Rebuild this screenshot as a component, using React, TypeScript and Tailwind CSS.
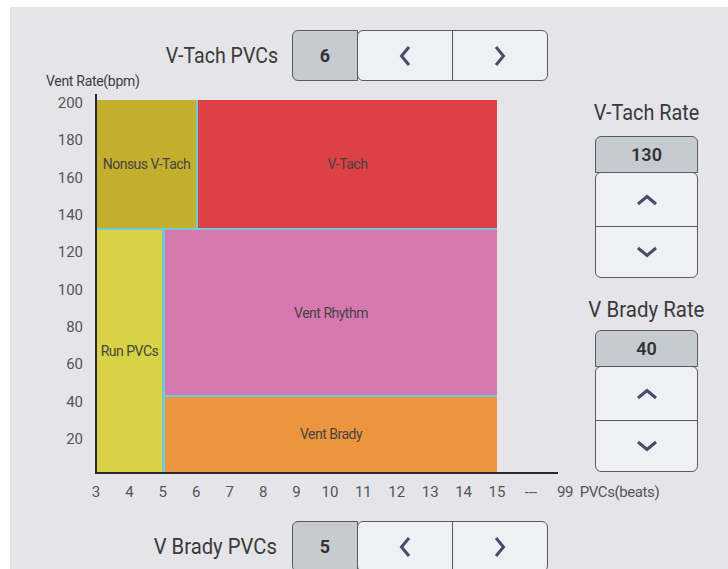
import React from "react";

const F = "font-['Roboto',sans-serif]";

function ChevLeft() {
  return (
    <svg width="12" height="22" viewBox="0 0 12 22">
      <path d="M10 2 L2.5 11 L10 20" stroke="#4b4a68" strokeWidth="3" fill="none" />
    </svg>
  );
}
function ChevRight() {
  return (
    <svg width="12" height="22" viewBox="0 0 12 22">
      <path d="M2 2 L9.5 11 L2 20" stroke="#4b4a68" strokeWidth="3" fill="none" />
    </svg>
  );
}
function ChevUp() {
  return (
    <svg width="22" height="12" viewBox="0 0 22 12">
      <path d="M2 10 L11 2.5 L20 10" stroke="#4b4a68" strokeWidth="3" fill="none" />
    </svg>
  );
}
function ChevDown() {
  return (
    <svg width="22" height="12" viewBox="0 0 22 12">
      <path d="M2 2 L11 9.5 L20 2" stroke="#4b4a68" strokeWidth="3" fill="none" />
    </svg>
  );
}

function HBox({ value }: { value: string }) {
  return (
    <div className="flex h-[51px] w-[256px]">
      <div className="w-[66px] h-full bg-[#c6cad1] border border-[#5b5b5b] rounded-l-[6px] flex items-center justify-center text-[18px] font-bold text-[#333]">
        {value}
      </div>
      <div className="flex-1 h-full -ml-px bg-[#eff0f4] border border-[#5b5b5b] rounded-[6px] flex">
        <div className="w-[95px] h-full border-r border-[#5b5b5b] flex items-center justify-center">
          <ChevLeft />
        </div>
        <div className="flex-1 h-full flex items-center justify-center">
          <ChevRight />
        </div>
      </div>
    </div>
  );
}

function VBox({ value }: { value: string }) {
  return (
    <div className="flex flex-col w-[103px]">
      <div className="h-[37px] bg-[#c6cad1] border border-[#5b5b5b] rounded-t-[6px] flex items-center justify-center text-[18px] font-semibold text-[#333]">
        {value}
      </div>
      <div className="-mt-px bg-[#eff0f4] border border-[#5b5b5b] rounded-[6px] flex flex-col">
        <div className="h-[54px] border-b border-[#5b5b5b] flex items-center justify-center">
          <ChevUp />
        </div>
        <div className="h-[50px] flex items-center justify-center">
          <ChevDown />
        </div>
      </div>
    </div>
  );
}

const yTicks = [200, 180, 160, 140, 120, 100, 80, 60, 40, 20];
const xTicks = [3, 4, 5, 6, 7, 8, 9, 10, 11, 12, 13, 14, 15];

function Chart() {
  return (
    <div className={`relative w-[585px] h-[440px] ${F}`}>
      <div className="absolute left-[36px] top-[-9px] text-[14px] leading-[18px] text-[#3d3d3d] whitespace-nowrap tracking-[-0.3px]">
        Vent Rate(bpm)
      </div>
      {yTicks.map((v) => (
        <div
          key={v}
          className="absolute right-[512px] text-[15px] leading-[18px] text-[#555] -translate-y-1/2"
          style={{ top: 22 + (200 - v) * 1.8667 }}
        >
          {v}
        </div>
      ))}
      {xTicks.map((v) => (
        <div
          key={v}
          className="absolute top-[402px] text-[15px] leading-[18px] text-[#555] -translate-x-1/2"
          style={{ left: 86 + (v - 3) * 33.42 }}
        >
          {v}
        </div>
      ))}
      <div className="absolute top-[402px] left-[521px] -translate-x-1/2 text-[15px] leading-[18px] text-[#555]">---</div>
      <div className="absolute top-[402px] left-[547px] text-[15px] leading-[18px] text-[#555] whitespace-nowrap tracking-[-0.4px]">
        99&nbsp; PVCs(beats)
      </div>
      {/* axes */}
      <div className="absolute left-[85px] top-[13px] w-[2px] h-[380px] bg-[#2a2a2a]" />
      <div className="absolute left-[85px] top-[391px] w-[463px] h-[2px] bg-[#2a2a2a]" />
      {/* plot */}
      <div className="absolute left-[87px] top-[19px] w-[400px] h-[372px] bg-[#6ccdd9] flex flex-col gap-[2px] text-[14px] text-[#444] tracking-[-0.5px]">
        <div className="h-[128px] flex gap-[2px]">
          <div className="w-[99px] bg-[#c4ae2e] flex items-center justify-center">Nonsus V-Tach</div>
          <div className="flex-1 bg-[#dd4143] flex items-center justify-center">V-Tach</div>
        </div>
        <div className="flex-1 flex gap-[3px]">
          <div className="w-[65px] bg-[#d8d246] flex items-center justify-center">Run PVCs</div>
          <div className="flex-1 flex flex-col gap-[2px]">
            <div className="h-[165px] bg-[#d878b0] flex items-center justify-center pt-[2px]">Vent Rhythm</div>
            <div className="flex-1 bg-[#ec953d] flex items-center justify-center">Vent Brady</div>
          </div>
        </div>
      </div>
    </div>
  );
}

export default function App() {
  return (
    <div className="w-[728px] h-[569px] bg-white pt-[7px] pl-[10px] overflow-hidden">
      <div className={`h-[562px] bg-[#e5e4e9] flex flex-col overflow-hidden ${F}`}>
        <div className="flex items-center h-[51px] mt-[23px] shrink-0">
          <div className="w-[268px] text-right text-[22px] text-[#3a3a3a] leading-none">
            <span className="inline-block origin-right scale-x-[0.89] whitespace-nowrap">V-Tach PVCs</span>
          </div>
          <div className="ml-[14px]">
            <HBox value="6" />
          </div>
        </div>
        <div className="flex h-[440px] shrink-0">
          <Chart />
          <div className="flex flex-col w-[103px]">
            <div className="mt-[17px] h-[30px] leading-[30px] text-center text-[22px] text-[#3a3a3a] whitespace-nowrap -mx-[12px]">
              <span className="inline-block scale-x-[0.9]">V-Tach Rate</span>
            </div>
            <div className="mt-[8px]">
              <VBox value="130" />
            </div>
            <div className="mt-[17px] h-[30px] leading-[30px] text-center text-[22px] text-[#3a3a3a] whitespace-nowrap -mx-[12px]">
              <span className="inline-block scale-x-[0.93]">V Brady Rate</span>
            </div>
            <div className="mt-[5px]">
              <VBox value="40" />
            </div>
          </div>
        </div>
        <div className="flex items-center h-[51px] shrink-0">
          <div className="w-[267px] text-right text-[22px] text-[#3a3a3a] leading-none">
            <span className="inline-block origin-right scale-x-[0.92] whitespace-nowrap">V Brady PVCs</span>
          </div>
          <div className="ml-[15px]">
            <HBox value="5" />
          </div>
        </div>
      </div>
    </div>
  );
}
